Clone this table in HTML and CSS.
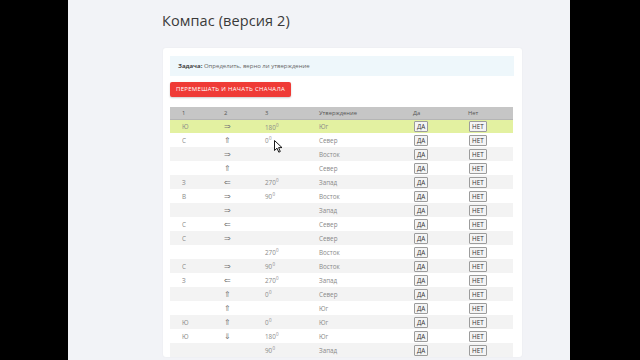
FILE: index.html
```html
<!DOCTYPE html>
<html lang="ru">
<head>
<meta charset="utf-8">
<title>Компас (версия 2)</title>
<link rel="stylesheet" href="styles.css">
</head>
<body>
<div class="frame">
  <div class="side left"></div>
  <main class="content">
    <h1 class="title">Компас (версия 2)</h1>
    <section class="card">
      <div class="task"><b>Задача:</b> Определить, верно ли утверждение</div>
      <button class="shuffle">ПЕРЕМЕШАТЬ И НАЧАТЬ СНАЧАЛА</button>
      <table class="grid">
        <colgroup>
          <col class="c1"><col class="c2"><col class="c3"><col class="c4"><col class="c5"><col class="c6">
        </colgroup>
        <thead>
          <tr><th>1</th><th>2</th><th>3</th><th>Утверждение</th><th>Да</th><th>Нет</th></tr>
        </thead>
        <tbody>
          <tr class="active"><td>Ю</td><td>⇒</td><td>180<sup>0</sup></td><td>Юг</td><td><span class="yn">ДА</span></td><td><span class="yn">НЕТ</span></td></tr>
          <tr><td>С</td><td>⇑</td><td>0<sup>0</sup></td><td>Север</td><td><span class="yn">ДА</span></td><td><span class="yn">НЕТ</span></td></tr>
          <tr><td></td><td>⇒</td><td></td><td>Восток</td><td><span class="yn">ДА</span></td><td><span class="yn">НЕТ</span></td></tr>
          <tr><td></td><td>⇑</td><td></td><td>Север</td><td><span class="yn">ДА</span></td><td><span class="yn">НЕТ</span></td></tr>
          <tr><td>З</td><td>⇐</td><td>270<sup>0</sup></td><td>Запад</td><td><span class="yn">ДА</span></td><td><span class="yn">НЕТ</span></td></tr>
          <tr><td>В</td><td>⇒</td><td>90<sup>0</sup></td><td>Восток</td><td><span class="yn">ДА</span></td><td><span class="yn">НЕТ</span></td></tr>
          <tr><td></td><td>⇒</td><td></td><td>Запад</td><td><span class="yn">ДА</span></td><td><span class="yn">НЕТ</span></td></tr>
          <tr><td>С</td><td>⇐</td><td></td><td>Север</td><td><span class="yn">ДА</span></td><td><span class="yn">НЕТ</span></td></tr>
          <tr><td>С</td><td>⇒</td><td></td><td>Север</td><td><span class="yn">ДА</span></td><td><span class="yn">НЕТ</span></td></tr>
          <tr><td></td><td></td><td>270<sup>0</sup></td><td>Восток</td><td><span class="yn">ДА</span></td><td><span class="yn">НЕТ</span></td></tr>
          <tr><td>С</td><td>⇒</td><td>90<sup>0</sup></td><td>Восток</td><td><span class="yn">ДА</span></td><td><span class="yn">НЕТ</span></td></tr>
          <tr><td>З</td><td>⇐</td><td>270<sup>0</sup></td><td>Запад</td><td><span class="yn">ДА</span></td><td><span class="yn">НЕТ</span></td></tr>
          <tr><td></td><td>⇑</td><td>0<sup>0</sup></td><td>Север</td><td><span class="yn">ДА</span></td><td><span class="yn">НЕТ</span></td></tr>
          <tr><td></td><td>⇑</td><td></td><td>Юг</td><td><span class="yn">ДА</span></td><td><span class="yn">НЕТ</span></td></tr>
          <tr><td>Ю</td><td>⇑</td><td>0<sup>0</sup></td><td>Юг</td><td><span class="yn">ДА</span></td><td><span class="yn">НЕТ</span></td></tr>
          <tr><td>Ю</td><td>⇓</td><td>180<sup>0</sup></td><td>Юг</td><td><span class="yn">ДА</span></td><td><span class="yn">НЕТ</span></td></tr>
          <tr><td></td><td></td><td>90<sup>0</sup></td><td>Запад</td><td><span class="yn">ДА</span></td><td><span class="yn">НЕТ</span></td></tr>
        </tbody>
      </table>
    </section>
    <svg class="cursor" width="9" height="13" viewBox="0 0 9 13"><path d="M0.5 0.5 L0.5 10.5 L3 8.2 L4.8 12.2 L6.3 11.5 L4.6 7.6 L8 7.6 Z" fill="#fff" stroke="#000" stroke-width="0.9" stroke-linejoin="round"/></svg>
  </main>
  <div class="side right"></div>
</div>
</body>
</html>
```

FILE: styles.css
```css
* { box-sizing: border-box; }
html, body { margin: 0; padding: 0; background: #000; }
body { font-family: "Open Sans", "Noto Sans", sans-serif; }
.frame { display: flex; width: 640px; height: 360px; overflow: hidden; }
.side { background: #000; }
.side.left { width: 68px; flex: none; }
.side.right { flex: 1; }
.content {
  position: relative;
  width: 502px;
  flex: none;
  background: #f2f3f7;
  padding: 10px 0 0 94px;
}
.title {
  margin: 0 0 16px;
  font-size: 14.5px;
  font-weight: 400;
  color: #3a3a3a;
  line-height: 22px;
  letter-spacing: 0.1px;
}
.card {
  width: 359px;
  background: #fff;
  border-radius: 3px;
  padding: 8px 8px 0 7px;
  box-shadow: 0 0 2px rgba(0,0,0,0.05);
  margin-left: 1px;
}
.task {
  height: 20px;
  background: #eef7fb;
  font-size: 6px;
  line-height: 20px;
  padding-left: 8px;
  color: #666;
}
.task b { color: #444; font-weight: 700; }
.shuffle {
  display: block;
  margin: 6px 0 10px;
  height: 15px;
  padding: 0 6px;
  border: none;
  border-radius: 2px;
  background: #ef3b36;
  color: #fff;
  font-family: inherit;
  font-size: 6px;
  line-height: 15px;
  letter-spacing: 0.3px;
  box-shadow: 0 1px 2px rgba(0,0,0,0.2);
}
.grid {
  width: 343px;
  table-layout: fixed;
  border-collapse: collapse;
  font-size: 6.3px;
  color: #8a8a8a;
}
.c1 { width: 42px; } .c2 { width: 41px; } .c3 { width: 54px; }
.c4 { width: 94px; } .c5 { width: 55px; } .c6 { width: 57px; }
.grid th {
  height: 12px;
  background: #c6c6c6;
  color: #555;
  font-weight: 400;
  text-align: left;
  padding: 0 0 0 12px;
  font-size: 5.8px;
  border-bottom: 1px solid #b5b5b5;
}
.grid td {
  height: 14px;
  padding: 0 0 0 12px;
  white-space: nowrap;
}
.grid tbody tr:nth-child(odd) { background: #f3f3f3; }
.grid tbody tr:nth-child(even) { background: #fff; }
.grid tbody tr.active { background: #e3f1a1; }
.grid td:nth-child(2) { font-size: 7.5px; color: #777; }
.grid sup { font-size: 4.5px; vertical-align: 2.5px; margin-left: 0.3px; }
.grid td:nth-child(5), .grid td:nth-child(6) { padding-left: 13px; }
.yn {
  display: inline-block;
  height: 11px;
  line-height: 9px;
  padding: 0 2px;
  border: 1px solid #9c9c9c;
  border-radius: 1px;
  background: #f4f4f4;
  color: #333;
  font-size: 6.3px;
  vertical-align: middle;
}
.cursor { position: absolute; left: 206px; top: 140px; }
```
